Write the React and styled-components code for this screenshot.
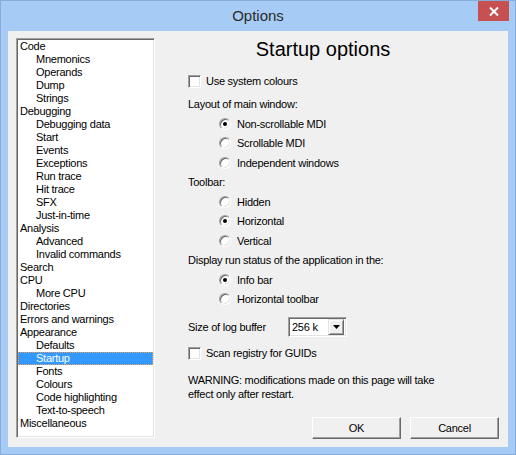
import React from 'react';
import styled, { createGlobalStyle } from 'styled-components';

const GlobalStyle = createGlobalStyle`
  html, body {
    margin: 0;
    padding: 0;
    background: #a6cbf4;
  }
  body {
    width: 516px;
    height: 455px;
    overflow: hidden;
    font-family: 'Liberation Sans', Arial, sans-serif;
  }
`;

const ScWindow = styled.div`
  width: 516px;
  height: 455px;
  box-sizing: border-box;
  background: #a6cbf4;
  border: 1px solid #86acdc;
  display: flex;
  flex-direction: column;
`;

const ScTitleBar = styled.div`
  height: 30px;
  display: grid;
  grid-template-columns: 1fr auto 1fr;
`;

const ScTitle = styled.div`
  grid-column: 2;
  align-self: center;
  padding-bottom: 1px;
  font-size: 15px;
  color: #2b2b2b;
`;

const ScClose = styled.div`
  grid-column: 3;
  justify-self: end;
  align-self: start;
  width: 31px;
  height: 20px;
  margin-right: 6px;
  background: #c75050;
  display: flex;
  align-items: center;
  justify-content: center;
`;

const ScClient = styled.div`
  flex: 1;
  margin: 0 7px 7px;
  background: #f0f0f0;
  display: flex;
  align-items: flex-start;
  padding-left: 8px;
`;

const ScTree = styled.div`
  width: 139px;
  height: 400px;
  margin-top: 7px;
  box-sizing: border-box;
  background: #fff;
  border: 1px solid;
  border-color: #a0a0a0 #fff #fff #a0a0a0;
  box-shadow: inset 1px 1px 0 #696969, inset -1px -1px 0 #e3e3e3;
  padding: 1px 1px 0 1px;
  font-size: 11px;
  letter-spacing: -0.25px;
`;

const ScTreeItem = styled.div`
  height: 13px;
  line-height: 13px;
  box-sizing: border-box;
  padding-left: ${({ level }) => (level ? 18 : 2)}px;
  white-space: nowrap;
  color: ${({ selected }) => (selected ? '#fff' : '#000')};
  background: ${({ selected }) => (selected ? '#3399ff' : 'transparent')};
  outline: ${({ selected }) => (selected ? '1px dotted #e8a060' : 'none')};
  outline-offset: -1px;
`;

const ScPane = styled.div`
  flex: 1;
  display: flex;
  flex-direction: column;
  padding: 5px 9px 0 33px;
  font-size: 11px;
  letter-spacing: -0.25px;
  color: #000;
`;

const ScHeading = styled.div`
  width: 270px;
  height: 26px;
  line-height: 26px;
  text-align: center;
  font-size: 20px;
  letter-spacing: 0;
`;

const ScRow = styled.div`
  display: flex;
  align-items: center;
  height: ${({ h }) => h || 19.5}px;
  margin-top: ${({ mt }) => mt || 0}px;
  padding-left: ${({ indent }) => (indent ? 31 : 0)}px;
  white-space: nowrap;
`;

const ScCheckBox = styled.span`
  width: 13px;
  height: 13px;
  box-sizing: border-box;
  background: #fff;
  border: 1px solid;
  border-color: #a0a0a0 #fff #fff #a0a0a0;
  box-shadow: inset 1px 1px 0 #696969, inset -1px -1px 0 #e3e3e3;
  margin-right: 5px;
  flex-shrink: 0;
`;

const ScRadio = styled.span`
  width: 12px;
  height: 12px;
  box-sizing: border-box;
  border-radius: 50%;
  background: #fff;
  border: 1px solid;
  border-color: #a0a0a0 #fff #fff #a0a0a0;
  box-shadow: inset 1px 1px 0 #696969, inset -1px -1px 0 #e3e3e3;
  margin-right: 6px;
  display: flex;
  align-items: center;
  justify-content: center;
  flex-shrink: 0;

  &::after {
    content: '';
    width: 4px;
    height: 4px;
    border-radius: 50%;
    background: ${({ checked }) => (checked ? '#000' : 'transparent')};
  }
`;

const ScLabelCell = styled.span`
  width: 100px;
`;

const ScCombo = styled.div`
  width: 59px;
  height: 20px;
  box-sizing: border-box;
  background: #fff;
  border: 1px solid;
  border-color: #a0a0a0 #fff #fff #a0a0a0;
  box-shadow: inset 1px 1px 0 #696969, inset -1px -1px 0 #e3e3e3;
  display: flex;
  align-items: center;
  padding: 1px 2px 1px 3px;
  font-size: 11px;
`;

const ScComboText = styled.span`
  flex: 1;
`;

const ScDropButton = styled.div`
  width: 16px;
  height: 16px;
  box-sizing: border-box;
  background: #f0f0f0;
  border: 1px solid;
  border-color: #e3e3e3 #696969 #696969 #e3e3e3;
  box-shadow: inset 1px 1px 0 #fff, inset -1px -1px 0 #a0a0a0;
  display: flex;
  align-items: center;
  justify-content: center;
`;

const ScWarning = styled.div`
  margin-top: 10px;
  line-height: 14px;
`;

const ScButtons = styled.div`
  display: flex;
  justify-content: flex-end;
  gap: 9px;
  margin-top: 16px;
`;

const ScButton = styled.div`
  width: 89px;
  height: 22px;
  box-sizing: border-box;
  background: #f0f0f0;
  border: 1px solid;
  border-color: #fff #696969 #696969 #fff;
  box-shadow: inset -1px -1px 0 #a0a0a0;
  display: flex;
  align-items: center;
  justify-content: center;
  font-size: 11px;
`;

const treeItems = [
  ['Code', 0], ['Mnemonics', 1], ['Operands', 1], ['Dump', 1], ['Strings', 1],
  ['Debugging', 0], ['Debugging data', 1], ['Start', 1], ['Events', 1], ['Exceptions', 1],
  ['Run trace', 1], ['Hit trace', 1], ['SFX', 1], ['Just-in-time', 1],
  ['Analysis', 0], ['Advanced', 1], ['Invalid commands', 1],
  ['Search', 0], ['CPU', 0], ['More CPU', 1], ['Directories', 0], ['Errors and warnings', 0],
  ['Appearance', 0], ['Defaults', 1], ['Startup', 1], ['Fonts', 1], ['Colours', 1],
  ['Code highlighting', 1], ['Text-to-speech', 1], ['Miscellaneous', 0],
];

const RadioRow = ({ checked, children }) => (
  <ScRow indent>
    <ScRadio checked={checked} />
    {children}
  </ScRow>
);

const App = () => {
  return (
    <>
      <GlobalStyle />
      <ScWindow>
        <ScTitleBar>
          <ScTitle>Options</ScTitle>
          <ScClose>
            <svg width='10' height='9' viewBox='0 0 10 9'>
              <path d='M1 0.5 L9 8.5 M9 0.5 L1 8.5' stroke='#fff' strokeWidth='2' />
            </svg>
          </ScClose>
        </ScTitleBar>

        <ScClient>
          <ScTree>
            {treeItems.map(([name, level]) => (
              <ScTreeItem key={name} level={level} selected={name === 'Startup'}>
                {name}
              </ScTreeItem>
            ))}
          </ScTree>

          <ScPane>
            <ScHeading>Startup options</ScHeading>

            <ScRow h={20} mt={9}>
              <ScCheckBox />
              Use system colours
            </ScRow>

            <ScRow h={20} mt={3}>Layout of main window:</ScRow>
            <RadioRow checked>Non-scrollable MDI</RadioRow>
            <RadioRow>Scrollable MDI</RadioRow>
            <RadioRow>Independent windows</RadioRow>

            <ScRow>Toolbar:</ScRow>
            <RadioRow>Hidden</RadioRow>
            <RadioRow checked>Horizontal</RadioRow>
            <RadioRow>Vertical</RadioRow>

            <ScRow>Display run status of the application in the:</ScRow>
            <RadioRow checked>Info bar</RadioRow>
            <RadioRow>Horizontal toolbar</RadioRow>

            <ScRow h={20} mt={8}>
              <ScLabelCell>Size of log buffer</ScLabelCell>
              <ScCombo>
                <ScComboText>256 k</ScComboText>
                <ScDropButton>
                  <svg width='7' height='4' viewBox='0 0 7 4'>
                    <path d='M0 0 H7 L3.5 4 Z' fill='#000' />
                  </svg>
                </ScDropButton>
              </ScCombo>
            </ScRow>

            <ScRow h={20} mt={6}>
              <ScCheckBox />
              Scan registry for GUIDs
            </ScRow>

            <ScWarning>
              WARNING: modifications made on this page will take
              <br />
              effect only after restart.
            </ScWarning>

            <ScButtons>
              <ScButton>OK</ScButton>
              <ScButton>Cancel</ScButton>
            </ScButtons>
          </ScPane>
        </ScClient>
      </ScWindow>
    </>
  );
};

export default App;
